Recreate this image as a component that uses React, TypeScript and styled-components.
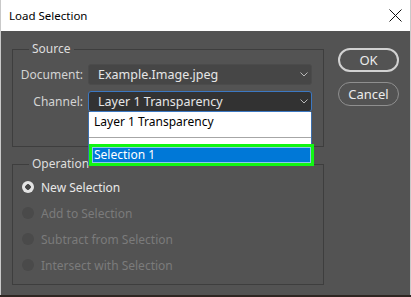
import React from "react";
import styled, { createGlobalStyle, css } from "styled-components";

const GlobalStyle = createGlobalStyle`
  html, body {
    margin: 0;
    padding: 0;
    background: #2e2622;
  }
  body {
    font-family: "Segoe UI", "Noto Sans", sans-serif;
    width: 411px;
    height: 297px;
    overflow: hidden;
  }
`;

function Chevron() {
  return (
    <svg width="8" height="5" viewBox="0 0 8 5">
      <polyline points="0.5,0.5 4,4 7.5,0.5" fill="none" stroke="#b8b8b8" strokeWidth="1" />
    </svg>
  );
}

function CloseIcon() {
  return (
    <svg width="13" height="13" viewBox="0 0 13 13">
      <line x1="0.5" y1="0.5" x2="12.5" y2="12.5" stroke="#111" strokeWidth="1" />
      <line x1="12.5" y1="0.5" x2="0.5" y2="12.5" stroke="#111" strokeWidth="1" />
    </svg>
  );
}

const operations = [
  { label: "New Selection", checked: true, disabled: false },
  { label: "Add to Selection", checked: false, disabled: true },
  { label: "Subtract from Selection", checked: false, disabled: true },
  { label: "Intersect with Selection", checked: false, disabled: true },
];

export default function App() {
  return (
    <>
      <GlobalStyle />
      <Window>
        <TitleBar>
          <Title>Load Selection</Title>
          <CloseButton>
            <CloseIcon />
          </CloseButton>
        </TitleBar>
        <Body>
          <Groups>
            <Group $padBottom={34}>
              <Legend>Source</Legend>
              <FieldRow>
                <Label>Document:</Label>
                <SelectBox>
                  <SelectText>Example.Image.jpeg</SelectText>
                  <Chevron />
                </SelectBox>
              </FieldRow>
              <FieldRow>
                <Label>Channel:</Label>
                <SelectWrap>
                  <SelectBox $focused>
                    <SelectText>Layer 1 Transparency</SelectText>
                    <Chevron />
                  </SelectBox>
                  <DropList>
                    <Option>Layer 1 Transparency</Option>
                    <Separator />
                    <Option $highlighted>Selection 1</Option>
                  </DropList>
                </SelectWrap>
              </FieldRow>
            </Group>
            <Group $padBottom={6} $spaced>
              <Legend>Operation</Legend>
              <RadioList>
                {operations.map((op) => (
                  <RadioRow key={op.label} $disabled={op.disabled}>
                    <Radio $checked={op.checked} $disabled={op.disabled} />
                    {op.label}
                  </RadioRow>
                ))}
              </RadioList>
            </Group>
          </Groups>
          <Buttons>
            <DialogButton $primary>OK</DialogButton>
            <DialogButton>Cancel</DialogButton>
          </Buttons>
        </Body>
      </Window>
    </>
  );
}

const Window = styled.div`
  width: 411px;
  height: 295px;
  box-sizing: border-box;
  border-left: 1px solid #c9c9c9;
  border-right: 1px solid #c9c9c9;
  display: flex;
  flex-direction: column;
  background: #535353;
`;

const TitleBar = styled.div`
  height: 31px;
  flex: none;
  background: #ffffff;
  display: flex;
  align-items: center;
  justify-content: space-between;
  padding: 0 8px 0 8px;
`;

const Title = styled.span`
  font-size: 11.5px;
  color: #000;
  margin-top: -1px;
`;

const CloseButton = styled.div`
  width: 13px;
  height: 13px;
  display: flex;
`;

const Body = styled.div`
  flex: 1;
  display: flex;
  align-items: flex-start;
  padding: 10px 0 0 11px;
`;

const Groups = styled.div`
  width: 312px;
  display: flex;
  flex-direction: column;
`;

const Group = styled.fieldset<{ $padBottom: number; $spaced?: boolean }>`
  margin: ${(p) => (p.$spaced ? "9px" : "0")} 0 0 0;
  padding: 0 11px ${(p) => p.$padBottom}px 0;
  border: 1px solid #3e3e3e;
  min-width: 0;
`;

const Legend = styled.legend`
  margin-left: 16px;
  padding: 0 3px;
  font-size: 12px;
  line-height: 16px;
  color: #dedede;
`;

const FieldRow = styled.div`
  display: flex;
  align-items: center;
  margin-top: 7px;
  & + & {
    margin-top: 6px;
  }
`;

const Label = styled.div`
  width: 70px;
  margin-right: 5px;
  text-align: right;
  font-size: 12px;
  color: #d4d4d4;
`;

const SelectWrap = styled.div`
  position: relative;
  flex: 1;
  display: flex;
`;

const SelectBox = styled.div<{ $focused?: boolean }>`
  flex: 1;
  height: 21px;
  box-sizing: border-box;
  border-radius: 3px;
  display: flex;
  align-items: center;
  justify-content: space-between;
  padding: 0 3px 0 9px;
  ${(p) =>
    p.$focused
      ? css`
          background: #323232;
          border: 1px solid #3c78c2;
        `
      : css`
          background: #464646;
          border: 1px solid #4b4b4b;
        `}
`;

const SelectText = styled.span`
  font-size: 12.5px;
  color: #e6e6e6;
`;

const DropList = styled.div`
  position: absolute;
  top: 21px;
  left: 0;
  width: 224px;
  height: 53px;
  box-sizing: border-box;
  background: #ffffff;
  border-left: 1px solid #3c6fae;
  border-right: 1px solid #3c6fae;
  display: flex;
  flex-direction: column;
`;

const Option = styled.div<{ $highlighted?: boolean }>`
  font-size: 12px;
  line-height: 16px;
  ${(p) =>
    p.$highlighted
      ? css`
          margin: 9px 0 0 3px;
          height: 16px;
          padding-left: 2px;
          background: #0078d7;
          color: #ffffff;
          outline: 3px solid #12f612;
          box-shadow: inset 0 0 0 1px #8ec4ee;
        `
      : css`
          height: 19px;
          padding-left: 5px;
          line-height: 19px;
          color: #000;
        `}
`;

const Separator = styled.div`
  margin-top: 6px;
  height: 1px;
  background: #a6a6a6;
`;

const RadioList = styled.div`
  margin-top: 2px;
  display: flex;
  flex-direction: column;
`;

const RadioRow = styled.div<{ $disabled?: boolean }>`
  height: 26px;
  display: flex;
  align-items: center;
  padding-left: 9px;
  font-size: 12px;
  color: ${(p) => (p.$disabled ? "#7b7b7b" : "#e8e8e8")};
`;

const Radio = styled.span<{ $checked?: boolean; $disabled?: boolean }>`
  width: 12px;
  height: 12px;
  border-radius: 50%;
  margin-right: 7px;
  box-sizing: border-box;
  background: ${(p) => (p.$disabled ? "#4a4a4a" : "#e4e4e4")};
  ${(p) =>
    p.$checked &&
    css`
      background: radial-gradient(circle, #444 0 2.5px, #e4e4e4 3px);
    `}
`;

const Buttons = styled.div`
  margin: 7px 0 0 14px;
  display: flex;
  flex-direction: column;
  gap: 10px;
`;

const DialogButton = styled.div<{ $primary?: boolean }>`
  width: 61px;
  height: 24px;
  box-sizing: border-box;
  border-radius: 12px;
  display: flex;
  align-items: center;
  justify-content: center;
  font-size: 13px;
  color: #ececec;
  border: ${(p) => (p.$primary ? "2px solid #d2d2d2" : "1.5px solid #8f8f8f")};
`;
